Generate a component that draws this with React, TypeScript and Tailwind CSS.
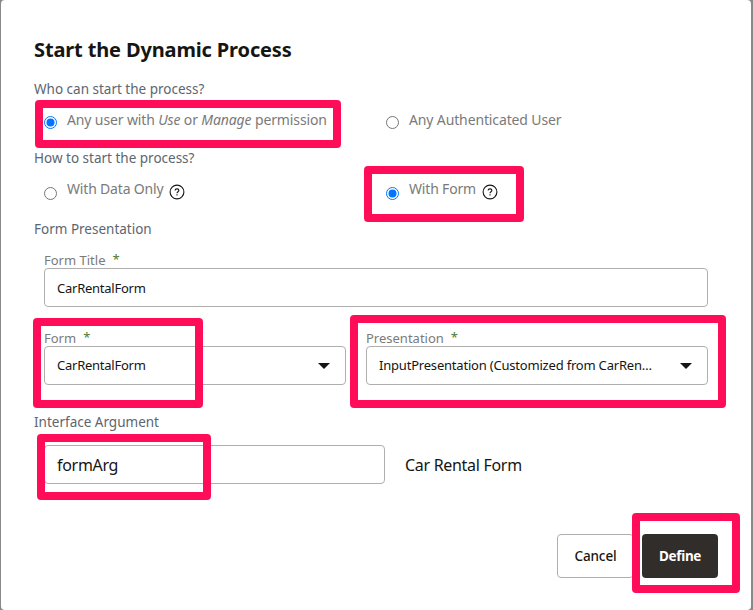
import type { ReactNode } from 'react';

function Radio({ checked = false }: { checked?: boolean }) {
  return (
    <svg className="block h-[13px] w-[13px] shrink-0" viewBox="0 0 13 13">
      <circle cx="6.5" cy="6.5" r="6" fill="#fff" stroke={checked ? '#0075ff' : '#767676'} strokeWidth="1" />
      {checked && <circle cx="6.5" cy="6.5" r="4" fill="#0075ff" />}
    </svg>
  );
}

function Help() {
  return (
    <svg className="block h-4 w-4 shrink-0" viewBox="0 0 16 16" fill="none" stroke="#161513" strokeWidth="1.1">
      <circle cx="8" cy="8" r="6.9" />
      <path d="M6.1 6.6C6.1 5.5 6.9 4.9 8 4.9s1.9.6 1.9 1.6c0 1.2-1.9 1.4-1.9 2.8" />
      <path d="M8 10.3v1.3" />
    </svg>
  );
}

function Caret() {
  return (
    <svg className="block h-[6px] w-[12px] shrink-0" viewBox="0 0 12 6">
      <path d="M0 0h12L6 6z" fill="#161513" />
    </svg>
  );
}

function Heading({ children }: { children: ReactNode }) {
  return <h2 className="h-5 text-[13.5px] leading-5 text-[#5c6670]">{children}</h2>;
}

function Label({ children }: { children: ReactNode }) {
  return (
    <div className="flex h-[18px] text-[13px] leading-5 text-[#7b7a78]">
      {children}
      <span className="-mt-px ml-[7px] text-[13px] leading-5 text-[#4c7a34]">*</span>
    </div>
  );
}

const box = 'flex h-[39px] items-center rounded-[4px] border border-[#b0afad] bg-white pl-3 text-[#161513]';

function Highlight({ className }: { className: string }) {
  return <div className={`pointer-events-none absolute rounded-[4px] border-8 border-[#ff0d59] ${className}`} />;
}

export default function App() {
  return (
    <div className="relative h-[610px] w-[753px] overflow-hidden bg-[#8b8987] pl-px pr-[2px] font-['Noto_Sans',sans-serif]">
      <main className="h-[610px] rounded-[4px] bg-white pl-[33px] pr-[43px] pt-9">
        <h1 className="h-7 whitespace-nowrap text-[20px] font-bold leading-7 tracking-[-0.14px] text-[#161513]">Start the Dynamic Process</h1>
        <section className="pt-[15px]">
          <Heading>Who can start the process?</Heading>
          <div className="flex h-[49px] pl-[10px] pt-[11px] text-[14px] leading-5 tracking-[-0.13px] text-[#7b7a78]">
            <div className="flex w-[342px] gap-[10px] whitespace-nowrap">
              <div className="pt-[6px]"><Radio checked /></div>
              <span>Any user with <em>Use</em> or <em>Manage</em> permission</span>
            </div>
            <div className="flex gap-[10px]">
              <div className="pt-[6px]"><Radio /></div>
              <span>Any Authenticated User</span>
            </div>
          </div>
        </section>
        <section>
          <Heading>How to start the process?</Heading>
          <div className="flex h-[51px] pl-[10px] pt-[11px] text-[14px] leading-5 tracking-[-0.18px] text-[#7b7a78]">
            <div className="flex w-[342px] gap-[10px]">
              <div className="pt-[8px]"><Radio /></div>
              <span>With Data Only</span>
              <div className="-ml-1 pt-[5px]"><Help /></div>
            </div>
            <div className="flex gap-[10px]">
              <div className="pt-[8px]"><Radio checked /></div>
              <span>With Form</span>
              <div className="-ml-1 pt-[5px]"><Help /></div>
            </div>
          </div>
        </section>
        <section>
          <Heading>Form Presentation</Heading>
          <div className="pl-[10px] pt-[11px]">
            <Label>Form Title</Label>
            <div className={`${box} pt-[2px] text-[13px] tracking-[-0.25px]`}>CarRentalForm</div>
            <div className="flex gap-5 pt-[21px]">
              <div className="w-[302px]">
                <Label>Form</Label>
                <div className={`${box} justify-between pr-[15px] text-[13px] tracking-[-0.25px]`}>
                  <span>CarRentalForm</span>
                  <Caret />
                </div>
              </div>
              <div className="w-[342px]">
                <Label>Presentation</Label>
                <div className={`${box} justify-between pr-[15px] text-[13px] tracking-[-0.2px]`}>
                  <span className="whitespace-nowrap">InputPresentation (Customized from CarRen…</span>
                  <Caret />
                </div>
              </div>
            </div>
          </div>
        </section>
        <section className="pt-[27px]">
          <Heading>Interface Argument</Heading>
          <div className="flex items-center gap-5 pl-[10px] pt-[13px] tracking-[-0.3px]">
            <div className={`${box} w-[341px] text-[16px]`}>formArg</div>
            <span className="text-[16px] text-[#161513]">Car Rental Form</span>
          </div>
        </section>
        <footer className="flex justify-end gap-2 pt-[50px] text-[13.5px]">
          <button className="h-11 w-[77px] rounded-[4px] border border-[#b0afad] font-medium tracking-[-0.1px] text-[#161513]">Cancel</button>
          <button className="-mr-[10px] h-11 w-[76px] rounded-[4px] bg-[#312d2a] font-bold tracking-[-0.3px] text-white">Define</button>
        </footer>
      </main>
      <Highlight className="left-[35px] top-[100px] h-[48px] w-[306px]" />
      <Highlight className="left-[364px] top-[166px] h-[56px] w-[160px]" />
      <Highlight className="left-[33px] top-[318px] h-[90px] w-[170px]" />
      <Highlight className="left-[350px] top-[315px] h-[93px] w-[376px]" />
      <Highlight className="left-[37px] top-[434px] h-[66px] w-[174px]" />
      <Highlight className="left-[632px] top-[513px] h-[80px] w-[108px]" />
    </div>
  );
}
